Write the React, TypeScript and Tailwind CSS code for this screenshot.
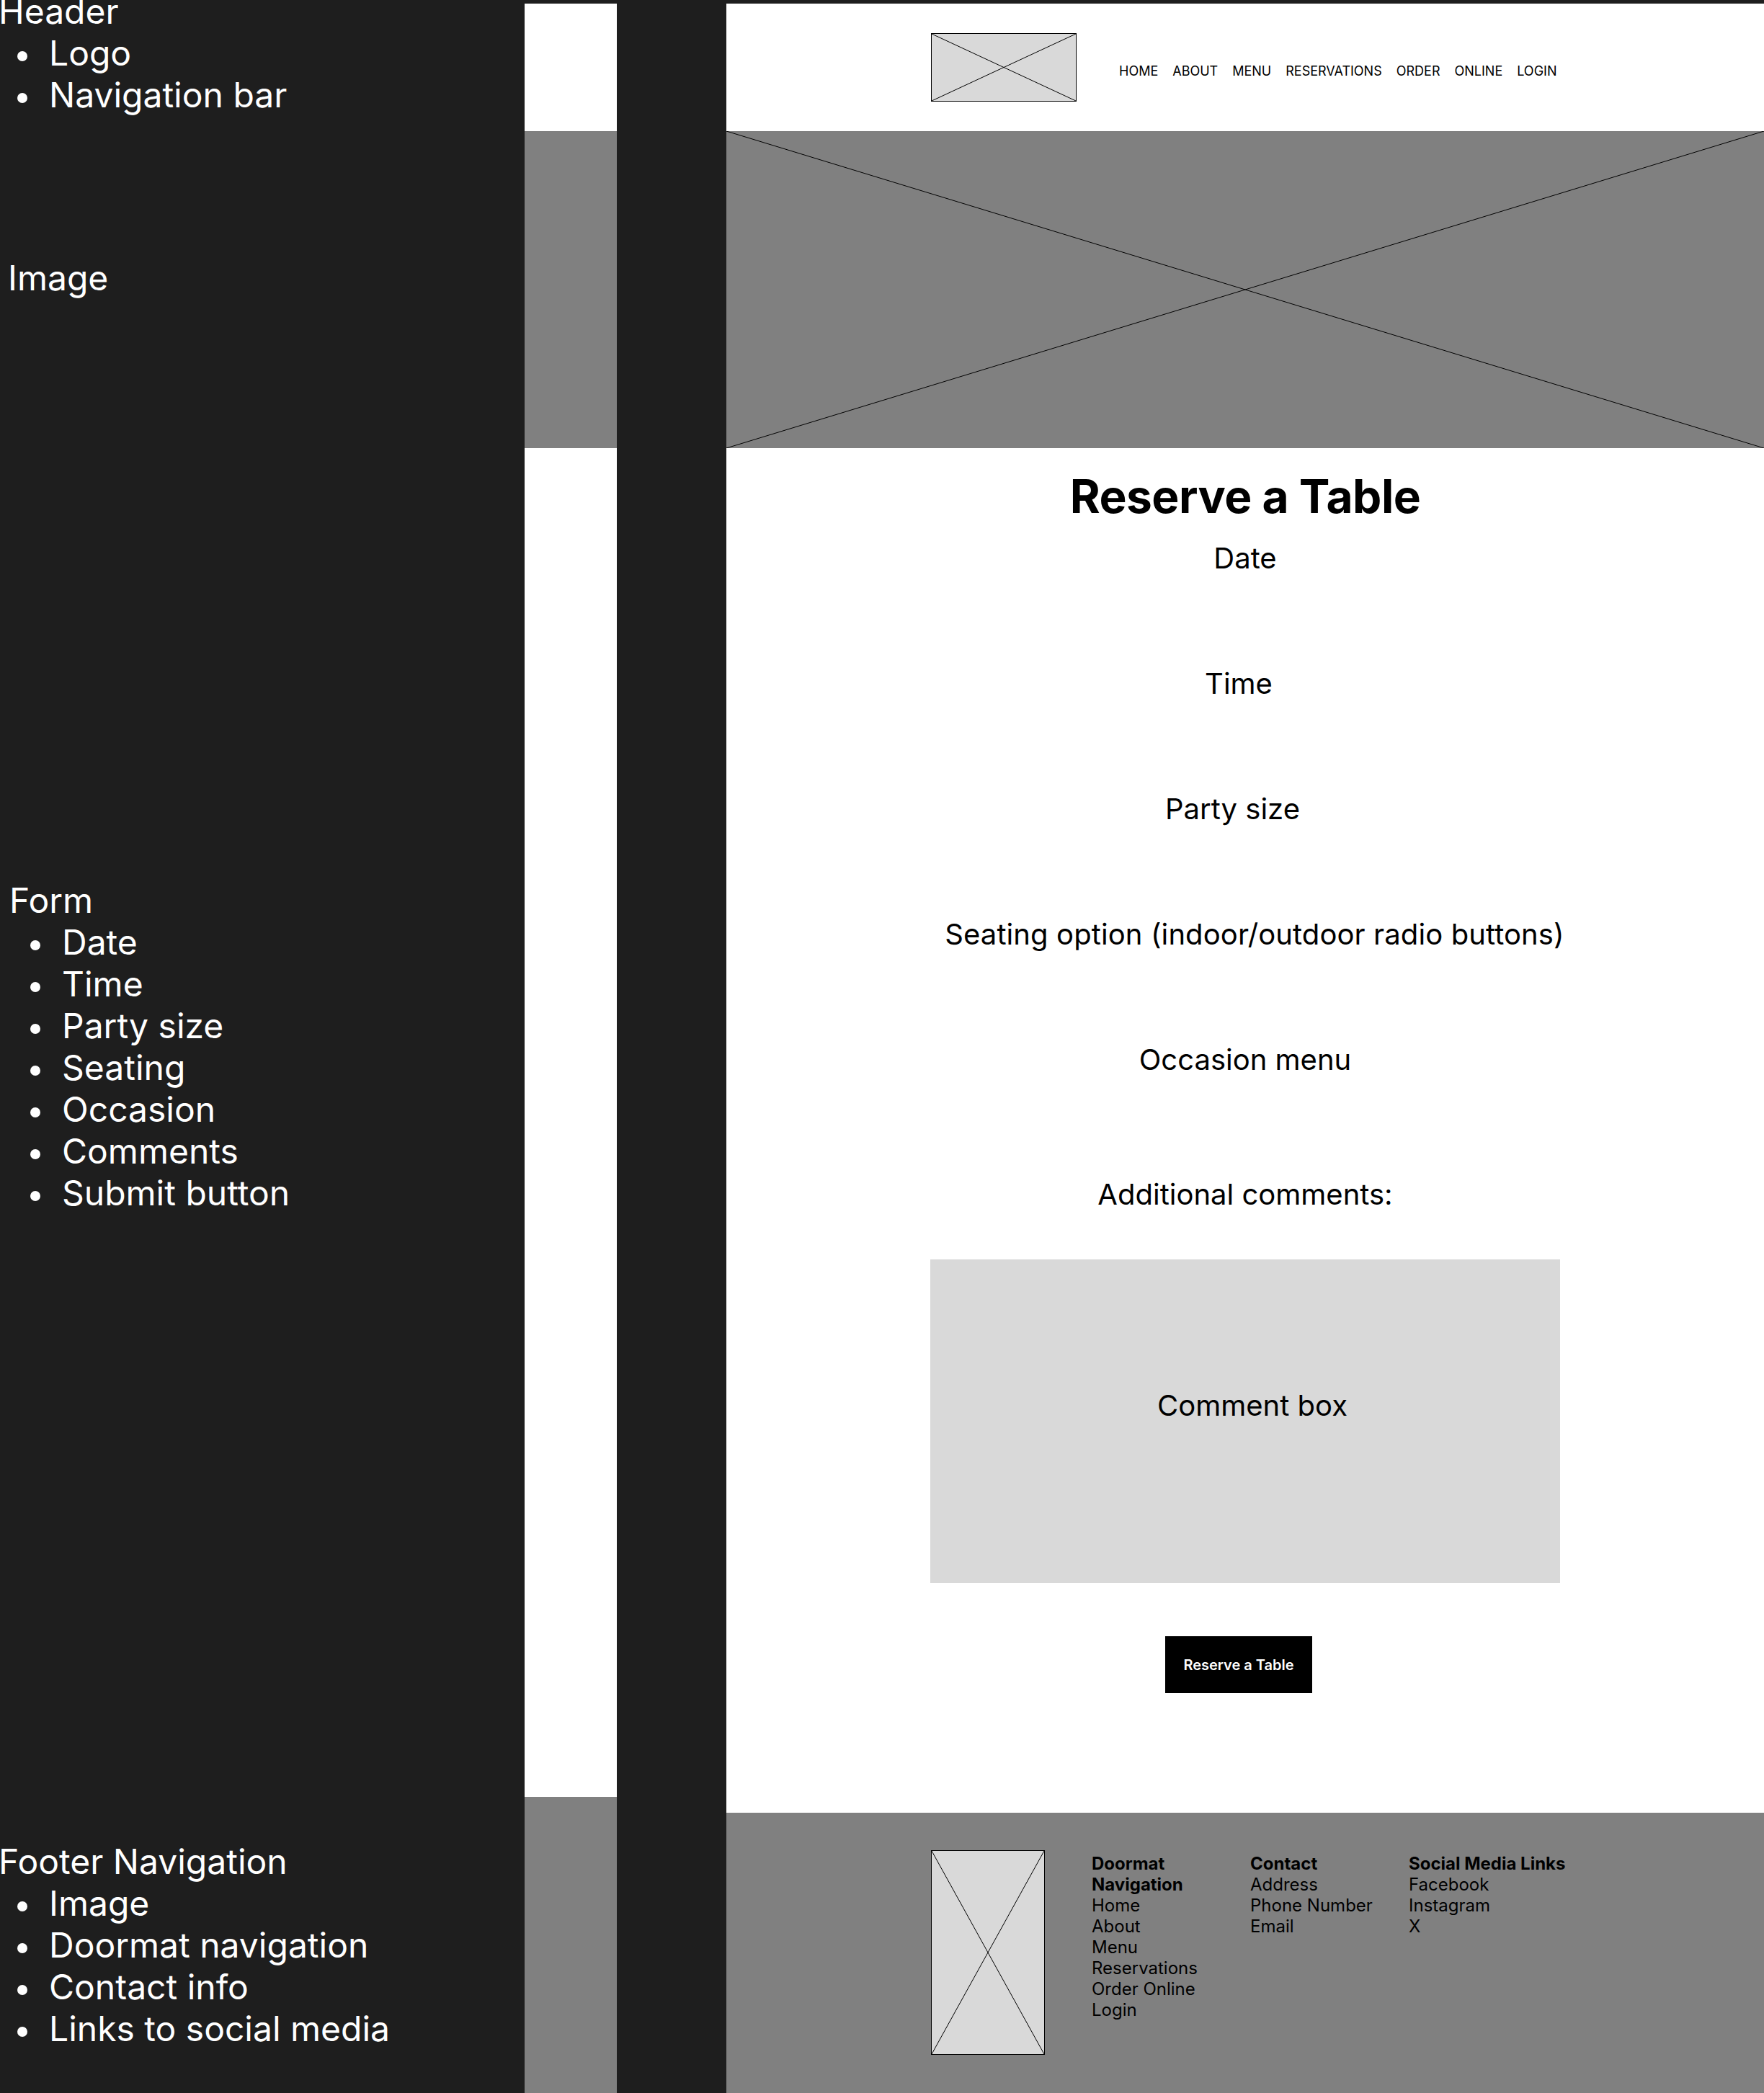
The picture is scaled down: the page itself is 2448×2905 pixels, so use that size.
import React from "react";

// wireframe placeholder cross
function Cross({ stroke = "#000" }: { stroke?: string }) {
    return (
        <svg className="block w-full h-full" viewBox="0 0 100 100" preserveAspectRatio="none">
            <line x1="0" y1="0" x2="100" y2="100" stroke={stroke} strokeWidth="1" vectorEffect="non-scaling-stroke" />
            <line x1="100" y1="0" x2="0" y2="100" stroke={stroke} strokeWidth="1" vectorEffect="non-scaling-stroke" />
        </svg>
    );
}

function Bullet({ text }: { text: string }) {
    return (
        <div className="flex items-start h-[58px]">
            <span className="mt-[26px] w-[14px] h-[14px] rounded-full bg-white shrink-0" />
            <span className="ml-[30px] whitespace-nowrap">{text}</span>
        </div>
    );
}

const navItems = ["HOME", "ABOUT", "MENU", "RESERVATIONS", "ORDER", "ONLINE", "LOGIN"];
const doormat = ["Home", "About", "Menu", "Reservations", "Order Online", "Login"];

export default function App() {
    return (
        <div className="w-[2448px] h-[2905px] bg-[#1e1e1e] flex overflow-hidden font-['Inter',sans-serif]">

            {/* Annotations */}
            <div className="w-[728px] shrink-0 flex flex-col text-white text-[48px] leading-[58px]">
                <div className="mt-[-13px]">
                    <div className="ml-[-2px] h-[58px]">Header</div>
                    <div className="pl-[24px]">
                        <Bullet text="Logo" />
                        <Bullet text="Navigation bar" />
                    </div>
                </div>

                <div className="mt-[196px] pl-[11px] h-[58px]">Image</div>

                <div className="mt-[806px]">
                    <div className="pl-[13px] h-[58px]">Form</div>
                    <div className="pl-[42px]">
                        <Bullet text="Date" />
                        <Bullet text="Time" />
                        <Bullet text="Party size" />
                        <Bullet text="Seating" />
                        <Bullet text="Occasion" />
                        <Bullet text="Comments" />
                        <Bullet text="Submit button" />
                    </div>
                </div>

                <div className="mt-[870px]">
                    <div className="ml-[-2px] h-[58px]">Footer Navigation</div>
                    <div className="pl-[24px]">
                        <Bullet text="Image" />
                        <Bullet text="Doormat navigation" />
                        <Bullet text="Contact info" />
                        <Bullet text="Links to social media" />
                    </div>
                </div>
            </div>

            {/* Mobile strip */}
            <div className="w-[128px] shrink-0 flex flex-col pt-[5px]">
                <div className="h-[177px] bg-white" />
                <div className="h-[440px] bg-[#808080]" />
                <div className="h-[1872px] bg-white" />
                <div className="flex-1 bg-[#808080]" />
            </div>

            <div className="w-[152px] shrink-0" />

            {/* Desktop frame */}
            <div className="w-[1440px] shrink-0 flex flex-col pt-[5px] text-black">
                <header className="h-[177px] bg-white flex items-center">
                    <div className="w-[874px] mx-auto flex items-center">
                        <div className="w-[202px] h-[95px] bg-[#d9d9d9] border border-black shrink-0 ml-[1px]">
                            <Cross />
                        </div>
                        <nav className="ml-[59px] mt-[11px] flex gap-[20px] text-[18px] leading-[22px]">
                            {navItems.map((item) => (
                                <span key={item}>{item}</span>
                            ))}
                        </nav>
                    </div>
                </header>

                <div className="h-[440px] bg-[#808080]">
                    <Cross />
                </div>

                <main className="h-[1894px] bg-white flex flex-col items-center pt-[28px]">
                    <h1 className="text-[64px] leading-[78px] font-bold tracking-[-0.5px]">Reserve a Table</h1>
                    <p className="mt-[23px] text-[40px] leading-[48px]">Date</p>
                    <p className="mt-[126px] mr-[18px] text-[40px] leading-[48px]">Time</p>
                    <p className="mt-[126px] mr-[35px] text-[40px] leading-[48px]">Party size</p>
                    <p className="mt-[126px] ml-[26px] text-[40px] leading-[48px] tracking-[0.1px]">Seating option (indoor/outdoor radio buttons)</p>
                    <p className="mt-[126px] text-[40px] leading-[48px]">Occasion menu</p>
                    <p className="mt-[139px] text-[40px] leading-[48px]">Additional comments:</p>
                    <div className="mt-[66px] w-[874px] h-[449px] bg-[#d9d9d9] flex items-center justify-center pl-[20px] pb-[44px] text-[40px] leading-[48px]">
                        Comment box
                    </div>
                    <button className="mt-[74px] mr-[18px] w-[204px] h-[79px] bg-black text-white text-[20px] font-semibold">
                        Reserve a Table
                    </button>
                </main>

                <footer className="flex-1 bg-[#808080]">
                    <div className="w-[874px] mx-auto pt-[52px] flex items-start text-[24px] leading-[29px]">
                        <div className="w-[158px] h-[284px] bg-[#d9d9d9] border border-black shrink-0 ml-[1px]">
                            <Cross />
                        </div>
                        <div className="ml-[65px] mt-[4px] flex gap-[20px]">
                            <div className="w-[200px]">
                                <p className="font-bold">Doormat Navigation</p>
                                {doormat.map((d) => (
                                    <p key={d}>{d}</p>
                                ))}
                            </div>
                            <div className="w-[200px]">
                                <p className="font-bold">Contact</p>
                                <p>Address</p>
                                <p>Phone Number</p>
                                <p>Email</p>
                            </div>
                            <div className="shrink-0 whitespace-nowrap">
                                <p className="font-bold">Social Media Links</p>
                                <p>Facebook</p>
                                <p>Instagram</p>
                                <p>X</p>
                            </div>
                        </div>
                    </div>
                </footer>
            </div>
        </div>
    );
}
